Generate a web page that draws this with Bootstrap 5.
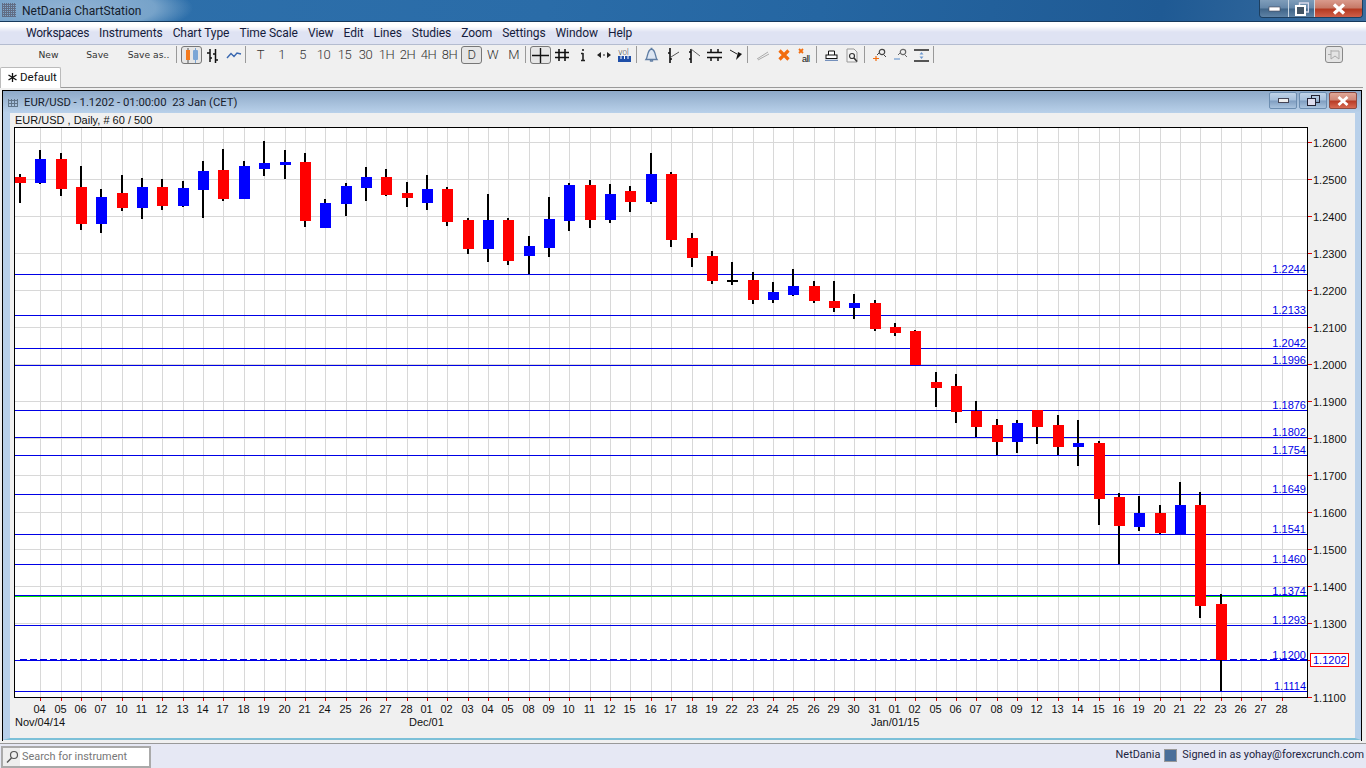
<!DOCTYPE html>
<html lang="en">
<head>
<meta charset="utf-8">
<title>NetDania ChartStation</title>
<link href="https://cdn.jsdelivr.net/npm/bootstrap@5.3.0/dist/css/bootstrap.min.css" rel="stylesheet">
<style>
html,body{height:768px;width:1366px;overflow:hidden;margin:0}
body{background:#f0f0f0;font-family:Roboto,"Liberation Sans",sans-serif;font-size:12px;color:#1a1a2a}
.ttl{height:22px;border-bottom:1px solid #16395c;background:
 radial-gradient(ellipse 125px 30px at 68px 8px,rgba(170,195,222,.8) 0,rgba(150,185,215,.7) 70%,rgba(120,160,200,0) 100%),
 linear-gradient(100deg,#2e70ab 0,#2a6ca8 40%,#2566a2 60%,#1f5a94 85%,#3a6d9f 100%)}
.ttl-name{margin-left:22px;line-height:22px;font-size:12px;color:#14202c}
.ttl-icon{width:14px;height:14px;margin:3px 0 0 2px;background:repeating-linear-gradient(90deg,#556 0 1px,transparent 1px 2px),repeating-linear-gradient(0deg,#556 0 1px,transparent 1px 2px);opacity:.7;position:absolute}
.wbtns{display:flex;height:18px;border:1px solid #1d3f60;border-top:0;border-radius:0 0 4px 4px;overflow:hidden;margin-right:3px}
.wb{display:flex;align-items:center;justify-content:center;height:17px;background:linear-gradient(#7f9dba 0,#6486a8 48%,#3f6488 52%,#5f83a6 100%);border-right:1px solid #c9d6e2}
.wb-c{background:linear-gradient(#d99a8c 0,#c77a68 45%,#b53a22 55%,#d0604a 100%);border-right:0}
.menu{height:23px;gap:10px;padding-left:26px;background:linear-gradient(#fff 0,#fff 4px,#dfe3f3 10px,#dfe3f3 100%);border-bottom:1px solid #b4bcd0;line-height:23px;font-size:12px;letter-spacing:-.07px;color:#161c3c}
.menu span:first-child{letter-spacing:-.27px}
.tools{height:22px;padding-top:1px;position:relative}
.txt{width:49px;text-align:center;font-size:9.2px;color:#333;line-height:17px;font-family:"DejaVu Sans",sans-serif;flex:none}
.txt-w{width:53px}
.tbi{width:21px;height:18px;flex:none;display:flex;align-items:center;justify-content:center;font-family:Roboto,sans-serif;font-weight:300;font-size:13px;letter-spacing:-.5px;color:#333;line-height:18px}
.tbi.on{border:1px solid #777;border-radius:3px;background:#e6e6e6}
.gap1{margin-left:1px}
.sep{width:1px;height:17px;background:#999;flex:none;margin:0 4px 0 1px}
.pin{position:absolute;left:1325px;top:1px;width:18px;height:17px;border:1px solid #888;border-radius:3px;background:#e4e4e4}
.tabsrow{height:21px;border-bottom:1px solid #999;margin-right:3px}
.tabx{width:61px;height:21px;background:#fff;border:1px solid #bbb;border-bottom:0;border-radius:2px 2px 0 0;line-height:17px;padding:0 0 2px 7px;font-size:11.5px;margin-bottom:-1px;z-index:1;color:#111;white-space:nowrap;display:flex;align-items:center;gap:3px}
.mdi{height:655px;padding:2px 4px 0 2px}
.inner{border-left:1px solid #000;border-top:1px solid #000;border-right:1px solid #000;height:651px;background:#f0f0f0}
.ihead{height:22px;background:linear-gradient(#8ea9c8,#b9d1ea);padding-right:3px}
.ititle{margin-left:21px;line-height:23px;font-size:11.3px;color:#16202c;white-space:pre}
.grip{position:absolute;left:5px;top:8px;width:10px;height:8px;background:repeating-linear-gradient(90deg,#456 0 1px,transparent 1px 3px),repeating-linear-gradient(0deg,#456 0 1px,transparent 1px 3px);opacity:.7}
.ib{width:28px;height:17px;margin:1px 1px 0 1px;display:flex;align-items:center;justify-content:center;border:1px solid #6c8db0;border-radius:2px;background:linear-gradient(#c0d3e8 0,#a5bfdb 48%,#7f9dc0 52%,#a9c3de 100%)}
.ib-c{background:linear-gradient(#e0a898 0,#d08878 45%,#b93c26 55%,#d86a52 100%);border-color:#8c4a40}
.client{border-left:7px solid #b8d0ea;border-right:6px solid #b8d0ea;border-bottom:2px solid #7cc0d8;height:627px}
.client svg{display:block}
.stat{height:25px;background:#e6e8f4;border-top:1px solid #999;font-size:10.9px;color:#1c2440}
.srch{width:150px;height:22px;margin:2px 0 0 1px;border:2px solid #aaa;background:#fff;display:flex;align-items:center;color:#777}
.srch-ic{width:17px;height:18px;background:#eee;flex:none;margin-right:2px;display:flex;align-items:center;justify-content:center}
.sq{width:13px;height:13px;background:#4a6f9a;border:1px solid #999;flex:none;margin:0 5px 0 4px}
.stxt{margin-left:auto;margin-right:2px;height:22px;white-space:nowrap}
</style>
</head>
<body>
<header class="ttl d-flex justify-content-between position-relative">
  <span class="ttl-icon"></span>
  <span class="ttl-name">NetDania ChartStation</span>
  <div class="wbtns">
    <div class="wb" style="width:29px"><svg width="13" height="6"><rect x="1" y="1" width="11" height="4" fill="#fff" stroke="#445" stroke-width=".6"/></svg></div>
    <div class="wb" style="width:26px"><svg width="14" height="14"><rect x="4.5" y="1" width="9" height="9" fill="none" stroke="#dde" stroke-width="1.4"/><rect x="1" y="4" width="9" height="9" fill="#456" stroke="#fff" stroke-width="2"/></svg></div>
    <div class="wb wb-c" style="width:47px"><svg width="14" height="12"><path d="M2 1.5 12 10.5M12 1.5 2 10.5" stroke="#fff" stroke-width="3.2"/></svg></div>
  </div>
</header>
<nav class="menu d-flex">
  <span>Workspaces</span><span>Instruments</span><span>Chart Type</span><span>Time Scale</span><span>View</span><span>Edit</span><span>Lines</span><span>Studies</span><span>Zoom</span><span>Settings</span><span>Window</span><span>Help</span>
</nav>
<div class="tools d-flex ps-4">
  <span class="txt">New</span><span class="txt">Save</span><span class="txt txt-w">Save as..</span>
  <span class="sep"></span>
  <span class="tbi on"><svg width="17" height="15"><path d="M5 0V15" stroke="#555"/><rect x="3" y="2" width="4" height="10" fill="#f47a1c"/><rect x="10" y="2" width="5" height="10" rx="1" fill="#7ba6d6"/><path d="M12.5 0V15" stroke="#7ba6d6"/></svg></span>
  <span class="tbi"><svg width="11" height="15"><path d="M3 1V14M8.500 1V15M0 5H3M3 10H5M6 6H8.500M8.500 12H11" stroke="#111" stroke-width="1.500" fill="none"/></svg></span>
  <span class="tbi"><svg width="16" height="10"><path d="M1 8 5 3.5 8 6.5 11 3 15 4" stroke="#3a68b0" stroke-width="1.4" fill="none"/></svg></span>
  <span class="sep"></span>
  <span class="tbi">T</span><span class="tbi">1</span><span class="tbi">5</span><span class="tbi">10</span><span class="tbi">15</span><span class="tbi">30</span><span class="tbi">1H</span><span class="tbi">2H</span><span class="tbi">4H</span><span class="tbi">8H</span>
  <span class="tbi on gap1">D</span><span class="tbi">W</span><span class="tbi">M</span>
  <span class="sep"></span>
  <span class="tbi on"><svg width="17" height="15"><path d="M8.5 0V15M0 7.5H17" stroke="#111" stroke-width="1.4"/></svg></span>
  <span class="tbi"><svg width="16" height="14"><path d="M5 1V13M11 1V13M1 4.5H15M1 9.5H15" stroke="#111" stroke-width="1.6"/></svg></span>
  <span class="tbi"><svg width="8" height="14"><path d="M4 1V3M4 5V12M2 5.5H4M2 12.5H6" stroke="#222" stroke-width="1.6"/></svg></span>
  <span class="tbi"><svg width="14" height="8"><path d="M0 4 4 1V7ZM14 4 10 1V7Z" fill="#222"/><path d="M6 4H8" stroke="#222"/></svg></span>
  <span class="tbi"><svg width="13" height="14" viewBox="0 0 13 14"><rect y="8" width="13" height="6" fill="#1f4fa8"/><path d="M3 8V11M6.5 8V11M10 8V11" stroke="#fff"/><text x="0" y="7" font-size="8" font-family="DejaVu Sans" fill="#111">vol</text></svg></span>
  <span class="sep"></span>
  <span class="tbi"><svg width="15" height="16"><path d="M2 12.5C4 10 3 3 7.5 2 12 3 11 10 13 12.5ZM6 13.5A2 2 0 0 0 9 13.5M6.5 1.5H8.5" fill="#dde6f2" stroke="#5f7da3" stroke-width="1.3"/></svg></span>
  <span class="tbi"><svg width="14" height="15"><path d="M4 0V15M2 5H4M4 11H6" stroke="#111" stroke-width="1.6"/><path d="M5 9 13 4" stroke="#555"/></svg></span>
  <span class="tbi"><svg width="14" height="15"><path d="M4 1V15M2 4H4M2 11H4" stroke="#111" stroke-width="1.6"/><path d="M4 1 13 8" stroke="#666"/></svg></span>
  <span class="tbi"><svg width="15" height="14"><path d="M0 4.5H15M0 9.5H15M4 1V5M11 1V5M4 9V13M11 9V13" stroke="#111" stroke-width="1.5"/></svg></span>
  <span class="tbi"><svg width="14" height="14"><path d="M1 2 8 6" stroke="#222"/><path d="M7 12 9 4 13 6Z" fill="#111"/></svg></span>
  <span class="sep"></span>
  <span class="tbi"><svg width="14" height="12"><path d="M1 10 12 3M2 11 13 5" stroke="#aaa"/></svg></span>
  <span class="tbi"><svg width="12" height="12"><path d="M1.5 1.5 10.500 10.500M10.500 1.500 1.500 10.500" stroke="#f26d0f" stroke-width="3.200"/></svg></span>
  <span class="tbi"><svg width="14" height="15"><path d="M1 1 5 5M5 1 1 5" stroke="#f26d0f" stroke-width="1.800"/><text x="4" y="14" font-size="9" font-family="Liberation Sans" fill="#111">all</text></svg></span>
  <span class="sep"></span>
  <span class="tbi"><svg width="13" height="11"><path d="M3.500 5V1H9.500V5" fill="#fff" stroke="#111"/><rect x="1" y="5" width="11" height="3.500" fill="#fff" stroke="#111"/><path d="M0 10.300H13" stroke="#5579b0"/></svg></span>
  <span class="tbi"><svg width="13" height="15"><path d="M1 1H8L11 4V14H1Z" fill="#f4f4f4" stroke="#999"/><circle cx="6" cy="8" r="2.500" fill="none" stroke="#333" stroke-width="1.200"/><path d="M8 10 11 13.500" stroke="#333" stroke-width="1.500"/></svg></span>
  <span class="sep"></span>
  <span class="tbi"><svg width="14" height="14"><circle cx="9" cy="4" r="2.700" fill="none" stroke="#444" stroke-width="1.200"/><path d="M10.500 6.500 13 9M6 5 4 7" stroke="#444"/><path d="M0 10.500H6M3 8V13" stroke="#f26d0f" stroke-width="1.200"/></svg></span>
  <span class="tbi"><svg width="14" height="14"><circle cx="9" cy="4" r="2.700" fill="none" stroke="#666" stroke-width="1.200"/><path d="M10.500 6.500 13 9M6 5 4 7" stroke="#666"/><path d="M0 11H6" stroke="#6f9ad0" stroke-width="1.200"/></svg></span>
  <span class="tbi"><svg width="15" height="13"><path d="M0 1H15M0 12H15" stroke="#222" stroke-width="1.400"/><path d="M7.500 3 5.500 5.500H9.500ZM7.500 10 5.500 7.500H9.500Z" fill="#6f9ad0"/></svg></span>
  <span class="sep"></span>
  <div class="pin d-flex align-items-center justify-content-center"><svg width="12" height="11"><path d="M0 5.500H3M3 1V10M3 2H11V10L7 7 3 10" fill="none" stroke="#aaa"/></svg></div>
</div>
<div class="tabsrow d-flex">
  <div class="tabx"><svg width="9" height="9" viewBox="0 0 9 9"><path d="M4.500 0V9M.5 2 8.500 7M8.500 2 .5 7" stroke="#111" stroke-width="1.300"/></svg><span>Default</span></div>
</div>
<main class="mdi">
  <section class="inner">
    <div class="ihead d-flex justify-content-between position-relative">
      <span class="grip"></span>
      <span class="ititle">EUR/USD - 1.1202 - 01:00:00  23 Jan (CET)</span>
      <div class="d-flex">
        <div class="ib"><svg width="11" height="5"><rect x=".5" y=".5" width="10" height="4" fill="#eee" stroke="#445"/></svg></div>
        <div class="ib"><svg width="13" height="11"><rect x="4.500" y=".5" width="8" height="7" fill="none" stroke="#223"/><rect x=".5" y="3.500" width="8" height="7" fill="#dde" stroke="#223"/></svg></div>
        <div class="ib ib-c"><svg width="12" height="10"><path d="M1.500 1 10.500 9M10.500 1 1.500 9" stroke="#fff" stroke-width="2.800"/></svg></div>
      </div>
    </div>
    <div class="client">
      <svg id="chart" width="1345" height="625" viewBox="10 113 1345 625" xmlns="http://www.w3.org/2000/svg" font-family="Liberation Sans, sans-serif" font-size="11" shape-rendering="crispEdges"></svg>
    </div>
  </section>
</main>
<footer class="stat d-flex">
  <div class="srch"><span class="srch-ic"><svg width="14" height="14"><circle cx="9" cy="5" r="3.500" fill="none" stroke="#555" stroke-width="1.200"/><path d="M6.500 8 2 12.500" stroke="#555" stroke-width="1.500"/></svg></span>Search for instrument</div>
  <div class="stxt d-flex align-items-center">NetDania<span class="sq"></span>Signed in as yohay@forexcrunch.com</div>
</footer>
<script>
const C=[
[20,174,203,177,183,'r'],[40,150,184,159,183,'b'],[61,153,196,159,189,'r'],[81,166,230,187,224,'r'],[101,189,233,197,224,'b'],
[122,175,211,193,208,'r'],[142,178,219,187,208,'b'],[162,179,210,187,206,'r'],[183,181,207,188,206,'b'],[203,161,218,171,190,'b'],
[223,149,201,170,199,'r'],[244,161,199,166,199,'b'],[264,141,176,163,169,'b'],[285,150,179,162,165,'b'],[305,153,227,162,221,'r'],
[325,199,228,203,228,'b'],[346,183,216,186,204,'b'],[366,167,201,177,188,'b'],[386,169,196,177,195,'r'],[407,182,207,193,198,'r'],
[427,175,210,189,203,'b'],[447,187,226,189,222,'r'],[468,218,254,220,249,'r'],[488,194,262,220,249,'b'],[508,218,265,220,261,'r'],
[529,236,274,246,256,'b'],[549,197,257,219,248,'b'],[569,183,231,185,221,'b'],[590,180,228,185,220,'r'],[610,184,223,194,220,'b'],
[630,186,212,191,202,'r'],[651,153,204,174,202,'b'],[671,172,247,174,240,'r'],[692,233,267,238,258,'r'],[712,251,284,256,281,'r'],
[732,262,285,280,282,'k'],[753,272,304,280,300,'r'],[773,282,303,292,300,'b'],[793,269,296,286,295,'b'],[814,281,303,286,301,'r'],
[834,281,312,301,308,'r'],[854,294,319,303,308,'b'],[875,300,331,303,329,'r'],[895,323,336,327,333,'r'],[915,330,365,331,365,'r'],
[936,372,407,382,388,'r'],[956,374,423,386,412,'r'],[976,401,437,411,427,'r'],[997,419,455,425,442,'r'],[1017,420,453,423,442,'b'],
[1037,410,444,410,427,'r'],[1058,415,455,425,447,'r'],[1078,420,466,443,447,'b'],[1099,441,525,443,499,'r'],[1119,493,564,497,526,'r'],
[1139,496,531,513,527,'b'],[1160,505,534,513,533,'r'],[1180,482,534,505,534,'b'],[1200,492,618,505,606,'r'],[1221,594,691,604,660,'r']];
const gx=C.slice(1).map(c=>c[0]).concat([1241,1261,1282]);
const days="04 05 06 07 10 11 12 13 14 17 18 19 20 21 24 25 26 27 28 01 02 03 04 05 08 09 10 11 12 15 16 17 18 19 22 23 24 25 26 29 30 31 01 02 05 06 07 08 09 12 13 14 15 16 19 20 21 22 23 26 27 28".split(' ');
const L=[[274,'1.2244'],[315,'1.2133'],[348,'1.2042'],[365,'1.1996'],[410,'1.1876'],[437,'1.1802'],[455,'1.1754'],[494,'1.1649'],[534,'1.1541'],[564,'1.1460'],[595,'1.1374'],[625,'1.1293'],[660,'1.1200'],[691,'1.1114']];
const col={r:'#f00',b:'#00f',k:'#000'};
const r=(x,y,w,h,f)=>`<rect x="${x}" y="${y}" width="${w}" height="${h}" fill="${f}"/>`;
const t=(x,y,s,a,f)=>`<text x="${x}" y="${y}" text-anchor="${a||'start'}" fill="${f||'#111'}" shape-rendering="auto">${s}</text>`;
let s=r(14,127,1294,571,'#fff');
for(let i=0;i<16;i++){const y=142+37*i;if(i<15)s+=r(15,y,1292,1,'#d8d8d8');s+=r(1308,y,4,1,'#e00000');s+=t(1313,y+5,(1.26-i*.01).toFixed(4));}
gx.forEach((x,i)=>{s+=r(x,128,1,569,'#d8d8d8');s+=r(x,698,1,3,'#e00000');s+=t(x-.5,713,days[i],'middle');});
L.forEach(l=>{s+=r(15,l[0],1292,1,'#0000e6');});
s+=r(15,596,1292,1,'#00e000');
for(let x=20;x<1307;x+=10)s+=r(x,659,7,1,'#0000e6');
C.forEach(c=>{const bx=Math.max(15,c[0]-5);s+=r(c[0]-1,c[1],2,c[2]-c[1],'#000');
 s+=r(bx,c[3],c[0]+6-bx,c[4]-c[3],col[c[5]]);});
L.forEach(l=>{s+=t(1306,l[1]==='1.1374'?595:l[0]-1,l[1],'end','#0000e6');});
s+=r(14,127,1294,1,'#000')+r(14,697,1294,1,'#000')+r(14,127,1,571,'#000')+r(1307,127,1,571,'#000');
s+=r(1308,660,3,1,'#e00000');
s+=`<rect x="1310.5" y="653.5" width="38" height="13" fill="#fff" stroke="#f00"/>`+t(1313,664,'1.1202','start','#0000e6');
s+=t(15,124,'EUR/USD , Daily, # 60 / 500')+t(15,726,'Nov/04/14')+t(409,726,'Dec/01')+t(871,726,'Jan/01/15');
document.getElementById('chart').innerHTML=s;
</script>
<script src="https://cdn.jsdelivr.net/npm/bootstrap@5.3.0/dist/js/bootstrap.bundle.min.js"></script>
</body>
</html>
